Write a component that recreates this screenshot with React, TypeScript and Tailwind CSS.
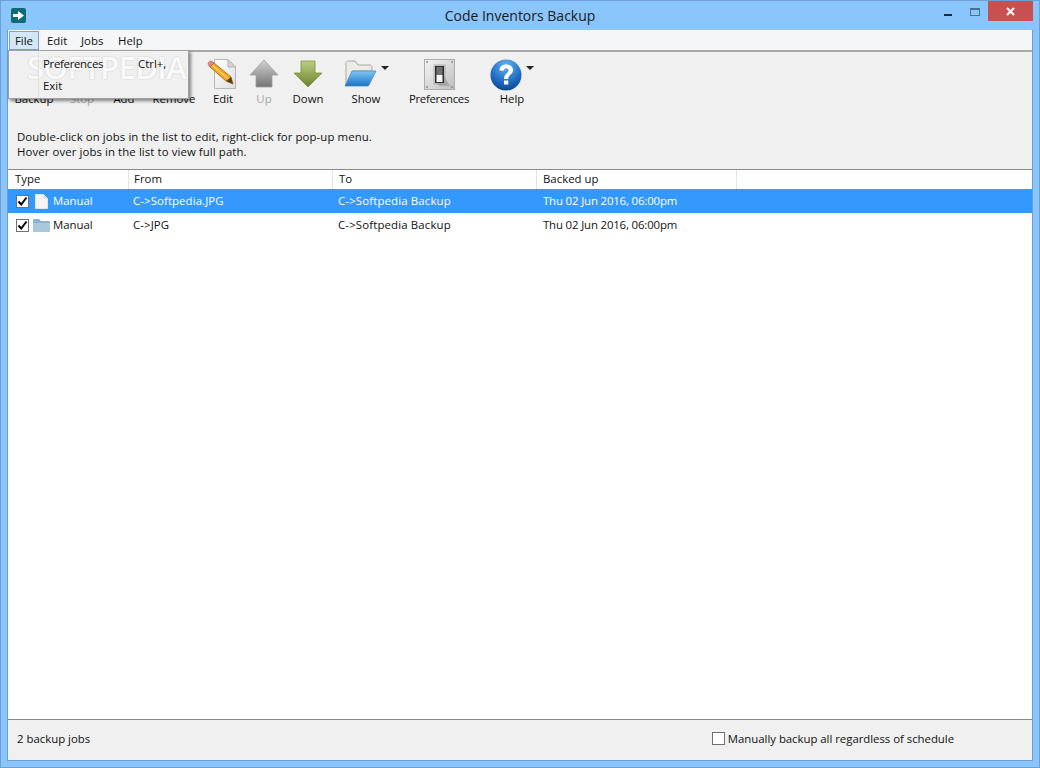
const font = { fontFamily: '"Open Sans", "Noto Sans", sans-serif' };

const EditIcon = () => (
  <svg width="32" height="32" viewBox="0 0 32 32">
    <defs>
      <linearGradient id="pg" x1="0" y1="0" x2="1" y2="1">
        <stop offset="0" stopColor="#ffffff" />
        <stop offset="1" stopColor="#dedede" />
      </linearGradient>
    </defs>
    <path d="M7.500 0.500H21L28.500 8V29.500H7.500Z" fill="url(#pg)" stroke="#b5b5b5" />
    <path d="M21 0.500V8H28.500Z" fill="#d4d4d4" stroke="#b5b5b5" />
    <path d="M3 8L7 4L24 18L26 25L19 22Z" fill="#f2a51c" stroke="#a9660e" strokeWidth="0.8" />
    <path d="M5 6L21.500 20" stroke="#ffd470" strokeWidth="1.500" />
    <path d="M3 8L7 4L5 2.500C4 1.800 3 2 2 3C1 4 .8 5 1.500 6Z" fill="#e8857f" stroke="#a9544e" strokeWidth="0.6" />
    <path d="M26 25L19 22L24 18Z" fill="#5a3f1c" />
  </svg>
);

const UpIcon = () => (
  <svg width="30" height="30" viewBox="0 0 30 30">
    <defs>
      <linearGradient id="ug" x1="0" y1="0" x2="0" y2="1">
        <stop offset="0" stopColor="#d2d2d2" />
        <stop offset="1" stopColor="#757575" />
      </linearGradient>
    </defs>
    <path d="M15 1L29 16H23V28H7V16H1Z" fill="url(#ug)" stroke="#a0a0a0" strokeWidth="0.8" />
  </svg>
);

const DownIcon = () => (
  <svg width="30" height="30" viewBox="0 0 30 30">
    <defs>
      <linearGradient id="dg" x1="0" y1="0" x2="0" y2="1">
        <stop offset="0" stopColor="#bccd85" />
        <stop offset="1" stopColor="#6a8229" />
      </linearGradient>
    </defs>
    <path d="M8 2H22V14H29L15 28L1 14H8Z" fill="url(#dg)" stroke="#7c9238" strokeWidth="0.8" />
  </svg>
);

const ShowIcon = () => (
  <svg width="33" height="28" viewBox="0 0 33 28">
    <defs>
      <linearGradient id="fb" x1="0" y1="0" x2="0" y2="1">
        <stop offset="0" stopColor="#7cc8f4" />
        <stop offset="1" stopColor="#1e72c6" />
      </linearGradient>
    </defs>
    <path d="M2 26V4C2 3 3 2 4 2H11L14 6H26C27 6 28 7 28 8V12H9L2 26Z" fill="#ebebe8" stroke="#a8a8a2" />
    <path d="M1 27L8 12H32L25 26C24.700 27 24 27 23 27Z" fill="url(#fb)" stroke="#4a8ac4" strokeWidth="0.8" />
  </svg>
);

const PrefsIcon = () => (
  <svg width="31" height="31" viewBox="0 0 31 31">
    <defs>
      <linearGradient id="sw" x1="0" y1="0" x2="1" y2="1">
        <stop offset="0" stopColor="#f6f6f6" />
        <stop offset="1" stopColor="#bcbcbc" />
      </linearGradient>
    </defs>
    <rect x="0.500" y="0.500" width="30" height="30" fill="url(#sw)" stroke="#adadad" />
    <rect x="10" y="6" width="11" height="19" fill="#d0d0d0" stroke="#888" strokeWidth="0.5" />
    <rect x="11" y="7" width="9" height="17" fill="#2e2e2e" />
    <rect x="12.500" y="8" width="6" height="8" fill="#707070" />
    <rect x="12.500" y="16" width="6" height="7" fill="#f5f5f5" />
    <path d="M20 17L26 27H15L13 24H20Z" fill="#9a9a9a" opacity="0.7" />
    <circle cx="3" cy="3" r="1" fill="#8a8a8a" />
    <circle cx="28" cy="3" r="1" fill="#8a8a8a" />
    <circle cx="3" cy="28" r="1" fill="#8a8a8a" />
    <circle cx="28" cy="28" r="1" fill="#8a8a8a" />
  </svg>
);

const HelpIcon = () => (
  <svg width="32" height="32" viewBox="0 0 32 32">
    <defs>
      <radialGradient id="hg" cx="0.5" cy="0.2" r="0.85">
        <stop offset="0" stopColor="#6cb0ee" />
        <stop offset="0.6" stopColor="#1f6fc4" />
        <stop offset="1" stopColor="#0b4187" />
      </radialGradient>
    </defs>
    <circle cx="16" cy="16" r="15.500" fill="url(#hg)" />
    <path d="M9.500 11.500C9.500 7.500 12.500 5.500 16.300 5.500C20.500 5.500 23 7.800 23 11C23 15.500 18.300 15.500 18.300 20H14C14 14.500 18.500 14.500 18.500 11.500C18.500 10 17.500 9.200 16.200 9.200C14.800 9.200 14 10.200 14 11.800Z" fill="#ffffff" />
    <rect x="14" y="21.500" width="4.300" height="4" fill="#ffffff" />
  </svg>
);

const Caret = () => <span className="block w-0 h-0 border-x-[4px] border-x-transparent border-t-[4px] border-t-[#222] mt-[7px]" />;

const buttons = [
  { label: "Backup", width: "w-[48px]", muted: false },
  { label: "Stop", width: "w-[48px]", muted: true },
  { label: "Add", width: "w-[36px]", muted: false },
  { label: "Remove", width: "w-[64px]", muted: false },
  { label: "Edit", width: "w-[34px]", muted: false, icon: <EditIcon /> },
  { label: "Up", width: "w-[48px]", muted: true, icon: <UpIcon /> },
  { label: "Down", width: "w-[40px]", muted: false, icon: <DownIcon /> },
  { label: "Show", width: "w-[76px]", muted: false, icon: <ShowIcon />, caret: true },
  { label: "Preferences", width: "w-[70px]", muted: false, icon: <PrefsIcon />, tight: true },
  { label: "Help", width: "w-[76px]", muted: false, icon: <HelpIcon />, caret: true },
];

const rows = [
  { from: "C->Softpedia.JPG", selected: true },
  { from: "C->JPG", selected: false },
];

const Check = () => (
  <span className="w-[13px] h-[13px] bg-white border border-[#707070] flex items-center justify-center">
    <svg width="11" height="11" viewBox="0 0 11 11">
      <path d="M1.500 5.500L4.200 8.500L9.500 1.500" fill="none" stroke="#000" strokeWidth="2" />
    </svg>
  </span>
);

const App = () => {
  return (
    <div style={font} className="w-[1040px] h-[768px] bg-[#8ac5fb] border border-[#6e9fd2] flex flex-col overflow-hidden text-[11.4px] leading-[15px] text-[#111]">
      <div className="h-[29px] shrink-0 grid grid-cols-3 items-start">
        <div className="pl-[10px] pt-[7px]">
          <span className="w-[15px] h-[15px] rounded-[2px] bg-[#0f6b75] flex items-center justify-center">
            <svg width="11" height="9" viewBox="0 0 11 9">
              <path d="M0 3H5V0L11 4.500L5 9V6H0Z" fill="#fff" />
            </svg>
          </span>
        </div>
        <div className="text-center text-[14px] leading-[29px] text-[#1a1a1a] whitespace-nowrap">Code Inventors Backup</div>
        <div className="flex justify-end pr-[6px]">
          <span className="w-[8px] h-[2px] bg-[#1f2a35] mt-[13px] mr-[18px]" />
          <span className="w-[10px] h-[8px] border border-[#4a6f92] border-t-2 mt-[7px] mr-[8px]" />
          <span className="w-[45px] h-[20px] bg-[#c75050] flex items-center justify-center">
            <svg width="9" height="9" viewBox="0 0 9 9">
              <path d="M1 1L8 8M8 1L1 8" stroke="#fff" strokeWidth="2" />
            </svg>
          </span>
        </div>
      </div>

      <div className="flex-1 mx-[6px] mb-[6px] border border-[#6e9fd2] border-t-0 flex flex-col relative bg-[#f0f0f0]">
        <div className="h-[22px] shrink-0 bg-[#f5f6f7] border-b-2 border-[#a9a9a9] flex items-start">
          <span className="w-[30px] h-[19px] mt-px ml-px text-center bg-[#d4e6f8] border border-[#7da2ce] leading-[18px]">File</span>
          <span className="w-[34px] pl-[8px] leading-[22px]">Edit</span>
          <span className="w-[37px] pl-[8px] leading-[22px]">Jobs</span>
          <span className="pl-[8px] leading-[22px]">Help</span>
        </div>

        <div className="h-[117px] shrink-0 flex flex-col">
          <div className="flex pl-[2px] pt-[7px]">
            {buttons.map((b) => (
              <div key={b.label} className={`${b.width} flex flex-col items-center`}>
                <div className="h-[32px] flex items-start justify-center gap-[4px]">
                  {b.icon}
                  {b.caret && <Caret />}
                </div>
                <span className={`whitespace-nowrap ${b.muted ? "text-[#a8a8a8]" : ""} ${b.tight ? "tracking-[-0.3px]" : ""}`}>{b.label}</span>
              </div>
            ))}
          </div>
          <div className="pl-[9px] mt-[23px] tracking-[0.09px]">
            <p>Double-click on jobs in the list to edit, right-click for pop-up menu.</p>
            <p>Hover over jobs in the list to view full path.</p>
          </div>
        </div>

        <div className="flex-1 bg-white border-y border-[#8a8a8a] flex flex-col">
          <div className="h-[19px] flex shrink-0 leading-[18px]">
            <div className="w-[121px] pl-[7px] border-r border-[#e3e3e3]">Type</div>
            <div className="w-[204px] pl-[5px] border-r border-[#e3e3e3]">From</div>
            <div className="w-[204px] pl-[6px] border-r border-[#e3e3e3]">To</div>
            <div className="w-[200px] pl-[6px] border-r border-[#e3e3e3]">Backed up</div>
          </div>
          {rows.map((r) => (
            <div key={r.from} className={`h-[24px] flex items-center shrink-0 ${r.selected ? "bg-[#3399ff] text-white" : ""}`}>
              <div className="w-[120px] pl-[8px] flex items-center">
                <Check />
                {r.selected ? (
                  <svg className="ml-[6px]" width="13" height="15" viewBox="0 0 13 15">
                    <path d="M0.500 0.500H8.500L12.500 4.500V14.500H0.500Z" fill="#f4f4f4" stroke="#dbe6f2" />
                    <path d="M8.500 0.500V4.500H12.500Z" fill="#d4dde6" />
                  </svg>
                ) : (
                  <svg className="ml-[4px]" width="17" height="13" viewBox="0 0 17 13">
                    <path d="M0 12V1C0 .5 .5 0 1 0H6L8 2H16C16.500 2 17 2.500 17 3V12C17 12.500 16.500 13 16 13H1C.5 13 0 12.500 0 12Z" fill="#8fb3cf" />
                    <path d="M0 4H17V12C17 12.500 16.500 13 16 13H1C.5 13 0 12.500 0 12Z" fill="#a9c8de" />
                  </svg>
                )}
                <span className={`pb-[2px] ${r.selected ? "ml-[5px]" : "ml-[3px]"}`}>Manual</span>
              </div>
              <div className="w-[205px] pl-[5px] pb-[2px] tracking-[0.1px]">{r.from}</div>
              <div className="w-[204px] pl-[5px] pb-[2px] tracking-[0.15px]">{"C->Softpedia Backup"}</div>
              <div className="pl-[6px] pb-[2px] tracking-[-0.15px]">Thu 02 Jun 2016, 06:00pm</div>
            </div>
          ))}
        </div>

        <div className="h-[40px] shrink-0 flex items-center justify-between pl-[9px] pr-[78px] pb-[4px]">
          <span>2 backup jobs</span>
          <span className="flex items-center tracking-[-0.03px]">
            <span className="w-[13px] h-[13px] bg-white border border-[#707070] mr-[3px]" />
            Manually backup all regardless of schedule
          </span>
        </div>

        <div className="absolute left-0 top-[20px] w-[181px] h-[49px] bg-[#f0f0f0] border border-[#a0a0a0] shadow-[2px_2px_3px_rgba(0,0,0,0.45)] flex">
          <span className="absolute left-[18px] top-[-1px] text-[31px] leading-[34px] font-semibold text-white/90 tracking-[-0.6px] whitespace-nowrap [text-shadow:0_0_2px_rgba(0,0,0,0.2)]">SOFTPEDIA</span>
          <div className="w-[30px] border-r border-[#e2e2e2] relative" />
          <div className="flex-1 pl-[4px] pt-[5px] relative">
            <div className="h-[22px] flex leading-[15px]">
              <span className="w-[95px] tracking-[-0.3px]">Preferences</span>
              <span>Ctrl+,</span>
            </div>
            <div>Exit</div>
          </div>
        </div>
      </div>
    </div>
  );
};

export default App;
